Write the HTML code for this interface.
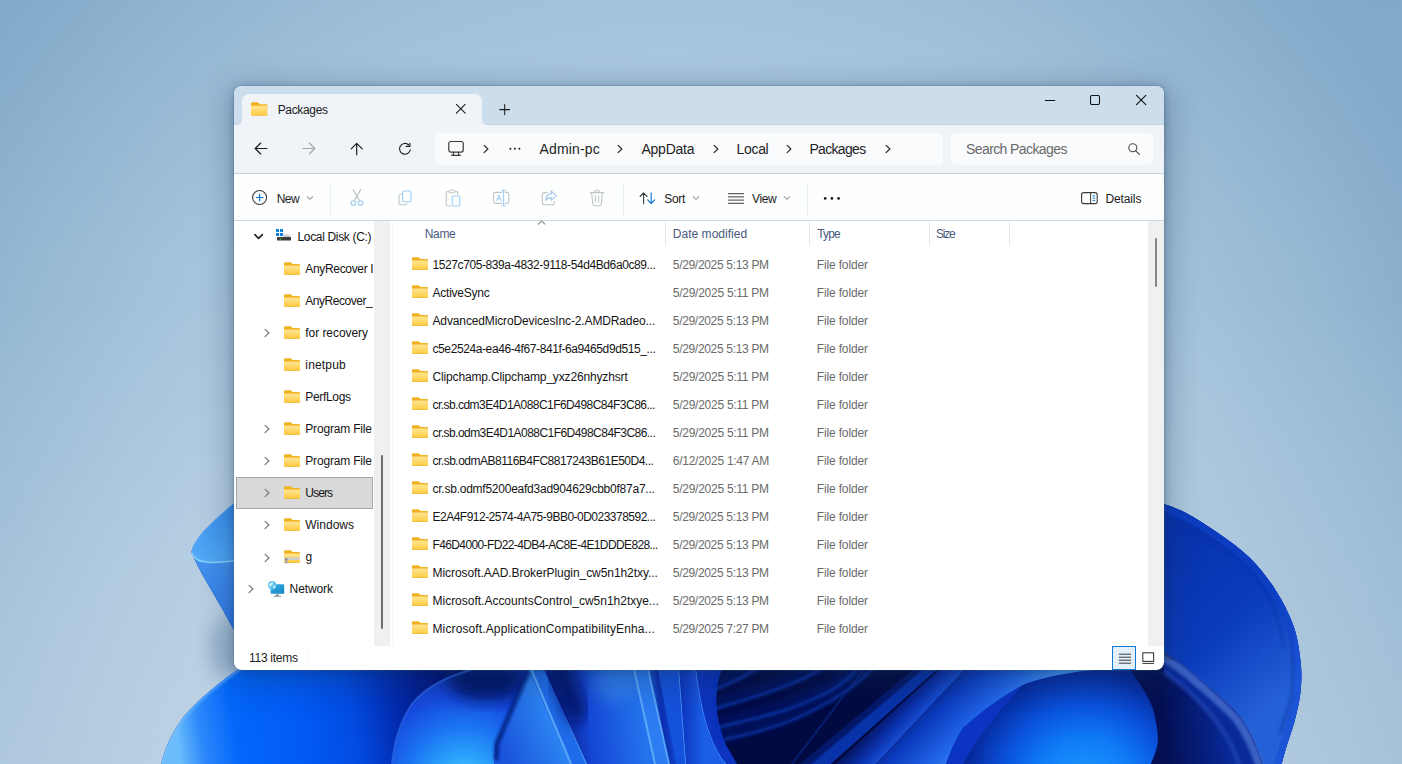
<!DOCTYPE html>
<html lang="en"><head><meta charset="utf-8"><title>Packages</title>
<style>
html,body{margin:0;padding:0;}
body{width:1402px;height:764px;position:relative;overflow:hidden;background:#9fbfd8;font-family:"Liberation Sans",sans-serif;}
.wall{position:absolute;left:0;top:0;}
.a{position:absolute;}
.t{position:absolute;white-space:nowrap;line-height:1;font-family:"Liberation Sans",sans-serif;}
.win{position:absolute;left:234px;top:86px;width:930px;height:584px;border-radius:8px;background:#fff;overflow:hidden;}
.shadow{position:absolute;left:234px;top:86px;width:930px;height:584px;border-radius:8px;box-shadow:0 0 0 1px rgba(70,100,130,.20),0 1px 7px 1px rgba(20,45,80,.22),0 8px 30px 6px rgba(20,45,80,.30);}
.sideclip{position:absolute;left:0;top:0;width:373px;height:764px;overflow:hidden;}
svg{display:block;overflow:visible}

</style></head>
<body>
<svg class="wall" width="1402" height="764" viewBox="0 0 1402 764">
<defs>
<radialGradient id="bgh" gradientUnits="userSpaceOnUse" cx="0" cy="0" r="1" gradientTransform="translate(670,560) scale(972,1080)">
<stop offset="0.0000" stop-color="#bbd4e8"/><stop offset="0.0714" stop-color="#bbd4e8"/><stop offset="0.1429" stop-color="#bad3e7"/><stop offset="0.2143" stop-color="#b8d2e6"/><stop offset="0.2857" stop-color="#b6d0e5"/><stop offset="0.3571" stop-color="#b3cee3"/><stop offset="0.4286" stop-color="#afcbe1"/><stop offset="0.5000" stop-color="#aac7de"/><stop offset="0.5714" stop-color="#a4c3db"/><stop offset="0.6429" stop-color="#9dbdd7"/><stop offset="0.7143" stop-color="#95b8d3"/><stop offset="0.7857" stop-color="#8cb1ce"/><stop offset="0.8571" stop-color="#85abca"/><stop offset="0.9286" stop-color="#83aac8"/><stop offset="1.0000" stop-color="#81a8c7"/></radialGradient>
<radialGradient id="bgv" gradientUnits="userSpaceOnUse" cx="330" cy="820" r="450">
<stop offset="0" stop-color="#d2deeb" stop-opacity="0.3"/><stop offset="1" stop-color="#d2deeb" stop-opacity="0"/>
</radialGradient>
<linearGradient id="bgt" gradientUnits="userSpaceOnUse" x1="0" y1="0" x2="0" y2="260"><stop offset="0" stop-color="#6a9cc2" stop-opacity="0.10"/><stop offset="1" stop-color="#6a9cc2" stop-opacity="0"/></linearGradient>
<linearGradient id="bgl" gradientUnits="userSpaceOnUse" x1="0" y1="300" x2="0" y2="764"><stop offset="0" stop-color="#d2deeb" stop-opacity="0"/><stop offset="1" stop-color="#d2deeb" stop-opacity="0.36"/></linearGradient>
<filter id="b4" x="-20%" y="-20%" width="140%" height="140%"><feGaussianBlur stdDeviation="4"/></filter>
<filter id="b8" x="-30%" y="-30%" width="160%" height="160%"><feGaussianBlur stdDeviation="8"/></filter>
<filter id="b14" x="-40%" y="-40%" width="180%" height="180%"><feGaussianBlur stdDeviation="14"/></filter>
<filter id="b2" x="-20%" y="-20%" width="140%" height="140%"><feGaussianBlur stdDeviation="1.6"/></filter>
<clipPath id="sil"><path d="M236,501.5 C233.2,503.9 225.0,510.6 219.5,515.7 C214.0,520.8 207.3,527.0 203.0,532.0 C198.7,537.0 195.3,542.5 193.4,546.0 C191.5,549.5 191.7,551.7 191.4,552.8 C192.9,555.8 196.9,564.5 200.2,570.7 C203.5,576.9 207.5,583.6 211.2,590.0 C214.9,596.4 218.4,602.4 222.2,609.0 C225.9,615.6 231.4,625.7 233.7,629.7 C236.0,633.7 235.6,632.5 236.0,633.0 L236,668 L240,668 C222,680 200,698 184,716 C172,732 165,748 161,764 L1281,766 C1281.8,763.0 1283.7,755.8 1286.0,748.0 C1288.3,740.2 1292.6,729.0 1295.0,719.5 C1297.4,710.0 1299.7,700.6 1300.6,691.0 C1301.5,681.4 1301.8,672.8 1300.6,662.0 C1299.4,651.2 1297.7,638.0 1293.5,626.0 C1289.3,614.0 1282.8,601.3 1275.5,590.0 C1268.2,578.7 1259.6,567.5 1250.0,558.0 C1240.4,548.5 1228.7,540.5 1218.0,533.0 C1207.3,525.5 1195.0,517.8 1186.0,513.0 C1177.0,508.2 1167.7,505.5 1164.0,504.0 L1164,480 L236,480 Z"/></clipPath>
<!-- cup petal -->
<linearGradient id="cupBody" gradientUnits="userSpaceOnUse" x1="195" y1="550" x2="240" y2="640"><stop offset="0" stop-color="#4797f1"/><stop offset="1" stop-color="#2c74e2"/></linearGradient>
<linearGradient id="cupIn" gradientUnits="userSpaceOnUse" x1="236" y1="500" x2="200" y2="560"><stop offset="0" stop-color="#3488ec"/><stop offset="1" stop-color="#52aaf5"/></linearGradient>
<!-- big left petal -->
<linearGradient id="bl" gradientUnits="userSpaceOnUse" x1="176" y1="730" x2="440" y2="690">
<stop offset="0" stop-color="#6abcfb"/><stop offset="0.09" stop-color="#2c88fa"/><stop offset="0.22" stop-color="#0366fa"/><stop offset="0.47" stop-color="#025af5"/><stop offset="0.66" stop-color="#024be1"/><stop offset="0.81" stop-color="#022eb4"/><stop offset="0.92" stop-color="#021d8e"/><stop offset="1" stop-color="#02157a"/></linearGradient>
<radialGradient id="blob2" gradientUnits="userSpaceOnUse" cx="464" cy="784" r="128"><stop offset="0" stop-color="#4fd0ff"/><stop offset="0.22" stop-color="#2aa4fb"/><stop offset="0.45" stop-color="#1b74f2"/><stop offset="0.7" stop-color="#164ade"/><stop offset="1" stop-color="#1032b8"/></radialGradient>
<linearGradient id="p1" gradientUnits="userSpaceOnUse" x1="500" y1="740" x2="560" y2="715"><stop offset="0" stop-color="#1a55dc"/><stop offset="1" stop-color="#2f8cf5"/></linearGradient>
<linearGradient id="p3" gradientUnits="userSpaceOnUse" x1="556" y1="700" x2="640" y2="690"><stop offset="0" stop-color="#08208c"/><stop offset="0.35" stop-color="#1446d4"/><stop offset="1" stop-color="#2474ee"/></linearGradient>
<linearGradient id="p3v" gradientUnits="userSpaceOnUse" x1="0" y1="669" x2="0" y2="764"><stop offset="0" stop-color="#3a94f5" stop-opacity=".55"/><stop offset="0.5" stop-color="#3a94f5" stop-opacity="0"/></linearGradient>
<linearGradient id="p5" gradientUnits="userSpaceOnUse" x1="645" y1="700" x2="672" y2="697"><stop offset="0" stop-color="#2a78ee"/><stop offset="0.55" stop-color="#0b2fae"/><stop offset="1" stop-color="#1448d6"/></linearGradient>
<linearGradient id="p7" gradientUnits="userSpaceOnUse" x1="682" y1="700" x2="704" y2="700"><stop offset="0" stop-color="#0d36c0"/><stop offset="1" stop-color="#1c5ee6"/></linearGradient>
<linearGradient id="band1" gradientUnits="userSpaceOnUse" x1="850" y1="700" x2="880" y2="730"><stop offset="0" stop-color="#02103f"/><stop offset="0.5" stop-color="#0a3cc0"/><stop offset="1" stop-color="#051a70"/></linearGradient>
<linearGradient id="band2" gradientUnits="userSpaceOnUse" x1="884" y1="704" x2="916" y2="734"><stop offset="0" stop-color="#020c44"/><stop offset="0.5" stop-color="#0a2fa8"/><stop offset="0.9" stop-color="#1c58e0"/><stop offset="1" stop-color="#2a6cec"/></linearGradient>
<linearGradient id="band3" gradientUnits="userSpaceOnUse" x1="925" y1="690" x2="985" y2="748"><stop offset="0" stop-color="#041a78"/><stop offset="0.3" stop-color="#0c3cc0"/><stop offset="0.7" stop-color="#2268ea"/><stop offset="1" stop-color="#4294f8"/></linearGradient>
<radialGradient id="blob3" gradientUnits="userSpaceOnUse" cx="1085" cy="790" r="170"><stop offset="0" stop-color="#1ea0ff"/><stop offset="0.3" stop-color="#0f7cf6"/><stop offset="0.5" stop-color="#0a52dc"/><stop offset="0.7" stop-color="#062a9e"/><stop offset="0.88" stop-color="#04135e"/><stop offset="1" stop-color="#030e4c"/></radialGradient>
<linearGradient id="lobe" gradientUnits="userSpaceOnUse" x1="1175" y1="560" x2="1290" y2="690"><stop offset="0" stop-color="#0834b0"/><stop offset="0.5" stop-color="#0b3cbc"/><stop offset="1" stop-color="#2460d6"/></linearGradient>
<linearGradient id="lobeIn" gradientUnits="userSpaceOnUse" x1="1160" y1="700" x2="1260" y2="690"><stop offset="0" stop-color="#030f52"/><stop offset="0.55" stop-color="#07258e"/><stop offset="1" stop-color="#0c3ab8"/></linearGradient>
</defs>
<rect width="1402" height="764" fill="url(#bgh)"/>
<rect width="1402" height="764" fill="url(#bgl)"/>
<rect width="1402" height="260" fill="url(#bgt)"/>
<rect width="1402" height="764" fill="url(#bgv)"/>
<!-- soft shadows on the wall -->
<ellipse cx="228" cy="648" rx="20" ry="30" fill="#7f9dbd" opacity=".5" filter="url(#b8)"/>
<g clip-path="url(#sil)">
<rect x="150" y="480" width="1170" height="290" fill="#0b3cc4"/>
<!-- cup petal -->
<path d="M236,501.5 C233.2,503.9 225.0,510.6 219.5,515.7 C214.0,520.8 207.3,527.0 203.0,532.0 C198.7,537.0 195.3,542.5 193.4,546.0 C191.5,549.5 191.7,551.7 191.4,552.8 C192.9,555.8 196.9,564.5 200.2,570.7 C203.5,576.9 207.5,583.6 211.2,590.0 C214.9,596.4 218.4,602.4 222.2,609.0 C225.9,615.6 231.4,625.7 233.7,629.7 C236.0,633.7 235.6,632.5 236.0,633.0 Z" fill="url(#cupBody)"/>
<path d="M236,501.5 C233.2,503.9 225.0,510.6 219.5,515.7 C214.0,520.8 207.3,527.0 203.0,532.0 C198.7,537.0 195.3,542.5 193.4,546.0 C191.5,549.5 191.7,551.7 191.4,552.8 C192.4,553.9 194.2,558.1 197.5,559.7 C200.8,561.3 206.4,562.0 211.0,562.4 C215.6,562.8 220.8,562.1 225.0,561.8 C229.2,561.4 234.2,560.5 236.0,560.3 Z" fill="url(#cupIn)"/>
<path d="M191.4,552.8 C192.4,553.9 194.2,558.1 197.5,559.7 C200.8,561.3 206.4,562.0 211.0,562.4 C215.6,562.8 220.8,562.1 225.0,561.8 C229.2,561.4 234.2,560.5 236.0,560.3" fill="none" stroke="#86d2fc" stroke-width="1.6"/>
<path d="M236.0,501.5 C233.2,503.9 225.0,510.6 219.5,515.7 C214.0,520.8 207.3,527.0 203.0,532.0 C198.7,537.0 195.3,542.5 193.4,546.0 C191.5,549.5 191.7,551.7 191.4,552.8" fill="none" stroke="#5cb0f6" stroke-width="1.3"/>
<!-- big left petal -->
<path d="M240,668 C222,680 200,698 184,716 C172,732 165,748 161,764 L540,764 L540,668 Z" fill="url(#bl)"/>
<path d="M240,668 C222,680 200,698 184,716 C172,732 165,748 161,764" fill="none" stroke="#7cc4fc" stroke-width="5" opacity=".55" filter="url(#b2)"/>
<!-- dark pocket above blob 2 -->
<!-- blob 2 -->
<path d="M392,764 C394,742 400,722 412,704 C426,686 448,676 474,669 L540,669 L540,764 Z" fill="url(#blob2)"/>
<ellipse cx="486" cy="680" rx="40" ry="20" fill="#04126a" filter="url(#b8)"/>
<path d="M392,764 C394,742 400,722 412,704 C426,686 448,676 474,669" fill="none" stroke="#2c66e6" stroke-width="2" opacity=".7"/>
<!-- petal 1 wedge + crease -->
<path d="M494,764 L495,745 L529,669 L570,764 Z" fill="url(#p1)"/>
<path d="M496,760 L497,743 L529,670" fill="none" stroke="#061a7a" stroke-width="5" opacity=".8" filter="url(#b2)"/>
<path d="M529,669 L544,669 L587,764 L570,764 Z" fill="#1e6cea"/>
<path d="M531,669 L571,764" stroke="#5eacf9" stroke-width="2.2" fill="none" opacity=".9"/>
<path d="M546,669 L587,764" stroke="#58a6f8" stroke-width="2.2" fill="none" opacity=".9"/>
<!-- broad face -->
<path d="M544,669 L634,669 L655,764 L587,764 Z" fill="url(#p3)"/>
<ellipse cx="616" cy="680" rx="22" ry="22" fill="#3a8ef2" opacity=".55" filter="url(#b8)"/>
<path d="M556,660 L580,720" stroke="#020c5c" stroke-width="22" fill="none" opacity=".8" filter="url(#b8)"/>
<!-- thin petals -->
<path d="M634,669 L648,669 L669,764 L655,764 Z" fill="#2c7cf2"/>
<path d="M648,669 L658,669 L676,764 L669,764 Z" fill="url(#p5)"/>
<path d="M634,669 L655,764" stroke="#62aef9" stroke-width="2" fill="none" opacity=".9"/>
<path d="M648,669 L669,764" stroke="#5caaf8" stroke-width="2" fill="none" opacity=".9"/>
<path d="M658,669 L679,669 L686,764 L676,764 Z" fill="#1552dc"/>
<path d="M679,669 L686,764" stroke="#4c9cf6" stroke-width="1.5" fill="none"/>
<path d="M679,669 L696,669 C700,700 707,740 726,764 L686,764 Z" fill="url(#p7)"/>
<path d="M696,669 C700,700 707,740 726,764" stroke="#4a98f5" stroke-width="1.5" fill="none"/>
<path d="M696,669 L722,669 C713,692 715,718 726,745 L737,764 L726,764 C707,740 700,700 696,669 Z" fill="#0c34c0"/>
<!-- dark navy core -->
<path d="M722,669 C713,692 715,718 726,745 L737,764 L900,764 L965,669 Z" fill="#020a42"/>
<g fill="none" stroke-linecap="round">
<path d="M714.3,689.7 Q735,682 758.5,668" transform="translate(-1.5,-5)" stroke="#06289a" stroke-width="9" opacity=".38" filter="url(#b4)"/>
<path d="M714,709 C735,703 760,695 775.6,689.7 C795,683 810,676 823,668" transform="translate(-1.5,-5)" stroke="#06289a" stroke-width="9" opacity=".38" filter="url(#b4)"/>
<path d="M718.5,727.5 C740,722 765,716 782.7,711 C800,705 818,697 832.6,689.7 C842,684 850,677 858,668" transform="translate(-1.5,-5)" stroke="#06289a" stroke-width="9" opacity=".38" filter="url(#b4)"/>
<path d="M724,739.6 C750,734 772,728 790,721 C806,714 820,707 832.6,699.7 C845,692 860,682 873,668" transform="translate(-1.5,-5)" stroke="#06289a" stroke-width="9" opacity=".38" filter="url(#b4)"/>
<path d="M714.3,689.7 Q735,682 758.5,668" stroke="#0a3cbc" stroke-width="2.4" opacity=".9" filter="url(#b2)"/>
<path d="M714,709 C735,703 760,695 775.6,689.7 C795,683 810,676 823,668" stroke="#0a3cbc" stroke-width="2.4" opacity=".9" filter="url(#b2)"/>
<path d="M718.5,727.5 C740,722 765,716 782.7,711 C800,705 818,697 832.6,689.7 C842,684 850,677 858,668" stroke="#0a3cbc" stroke-width="2.4" opacity=".9" filter="url(#b2)"/>
<path d="M724,739.6 C750,734 772,728 790,721 C806,714 820,707 832.6,699.7 C845,692 860,682 873,668" stroke="#0a3cbc" stroke-width="2.4" opacity=".9" filter="url(#b2)"/>
</g>
<path d="M792,764 L864,669" stroke="#0a2c8e" stroke-width="2" opacity=".6"/>
<!-- bands -->
<path d="M809,764 L831,764 L938,669 L922,669 Z" fill="#0832a8"/>
<path d="M800,764 L812,764 L924,669 L914,669 Z" fill="#051c74" opacity=".8"/>
<path d="M831,764 L836,764 L942,669 L938,669 Z" fill="#020a42"/>
<path d="M835,764 L876,764 L965,669 L940,669 Z" fill="url(#band2)"/>
<!-- big light band -->
<path d="M965,669 L1110,669 C1085,670 1050,675 1027,683 C1010,691 985,708 963,728 C955,740 950,752 946,764 L876,764 Z" fill="url(#band3)"/>
<path d="M1027,683 L1023,685 C1012,696 990,722 974,745 L963,764 L946,764 C950,752 955,740 963,728 C985,708 1010,691 1027,683 Z" fill="#0c34c2"/>
<!-- big blob -->
<path d="M1023,685 C1012,696 990,722 974,745 L963,764 L1260,764 L1260,669 L1110,669 C1085,670 1050,675 1023,685 Z" fill="url(#blob3)"/>
<!-- right lobe -->
<path d="M1126.0,664.0 C1128.3,667.3 1136.0,677.7 1140.0,684.0 C1144.0,690.3 1147.5,696.5 1150.0,702.0 C1152.5,707.5 1153.7,710.2 1155.0,717.0 C1156.3,723.8 1158.5,734.5 1157.7,742.7 C1156.9,750.9 1151.3,762.1 1150.0,766.0 L1320,766 L1320,500 L1126,500 Z" fill="url(#lobeIn)"/>
<path d="M1164.0,672.0 C1167.5,674.7 1178.3,682.2 1185.0,688.0 C1191.7,693.8 1198.5,701.0 1204.0,707.0 C1209.5,713.0 1213.7,718.0 1218.0,724.0 C1222.3,730.0 1226.3,736.0 1230.0,743.0 C1233.7,750.0 1238.3,762.2 1240.0,766.0 L1290,766 L1290,660 L1164,660 Z" fill="#0a2a9a"/>
<path d="M1164.0,672.0 C1167.5,674.7 1178.3,682.2 1185.0,688.0 C1191.7,693.8 1198.5,701.0 1204.0,707.0 C1209.5,713.0 1213.7,718.0 1218.0,724.0 C1222.3,730.0 1226.3,736.0 1230.0,743.0 C1233.7,750.0 1238.3,762.2 1240.0,766.0" fill="none" stroke="#2246b4" stroke-width="5" opacity=".65" filter="url(#b2)"/>
<path d="M1164.0,652.0 C1167.5,654.3 1178.3,661.0 1185.0,666.0 C1191.7,671.0 1197.8,676.7 1204.0,682.0 C1210.2,687.3 1216.0,692.3 1222.0,698.0 C1228.0,703.7 1234.7,709.0 1240.0,716.0 C1245.3,723.0 1250.0,731.7 1254.0,740.0 C1258.0,748.3 1262.3,761.7 1264.0,766.0 L1320,766 L1320,480 L1164,480 Z" fill="url(#lobe)"/>
<path d="M1164.0,652.0 C1167.5,654.3 1178.3,661.0 1185.0,666.0 C1191.7,671.0 1197.8,676.7 1204.0,682.0 C1210.2,687.3 1216.0,692.3 1222.0,698.0 C1228.0,703.7 1234.7,709.0 1240.0,716.0 C1245.3,723.0 1250.0,731.7 1254.0,740.0 C1258.0,748.3 1262.3,761.7 1264.0,766.0" transform="translate(-3,4)" fill="none" stroke="#5a84dc" stroke-width="8" opacity=".62" filter="url(#b2)"/>
<path d="M1164,533 C1180,532 1204,535 1240,558 C1262,578 1280,612 1284,650" fill="none" stroke="#082c9c" stroke-width="2.5" opacity=".4" filter="url(#b2)"/>
<path d="M1164,522 C1180,522 1210,534 1232,547 C1250,560 1270,584 1288,623 C1294,640 1294,680 1291,698 C1288,712 1284,722 1280,734" fill="none" stroke="#08309f" stroke-width="3" opacity=".5" filter="url(#b2)"/>
<path d="M1164.0,504.0 C1167.7,505.5 1177.0,508.2 1186.0,513.0 C1195.0,517.8 1207.3,525.5 1218.0,533.0 C1228.7,540.5 1240.4,548.5 1250.0,558.0 C1259.6,567.5 1268.2,578.7 1275.5,590.0 C1282.8,601.3 1289.3,614.0 1293.5,626.0 C1297.7,638.0 1299.4,651.2 1300.6,662.0 C1301.8,672.8 1301.5,681.4 1300.6,691.0 C1299.7,700.6 1297.4,710.0 1295.0,719.5 C1292.6,729.0 1288.3,740.2 1286.0,748.0 C1283.7,755.8 1281.8,763.0 1281.0,766.0" fill="none" stroke="#1248d4" stroke-width="14" opacity=".45"/>
</g>
</svg>

<div class="shadow"></div>
<div class="win">
  <!-- coordinates inside .win are page coords minus (234,86) -->
  <div class="a" style="left:0;top:0;width:930px;height:39px;background:#ccdeec;"></div>
  <div class="a" style="left:0;top:38px;width:930px;height:1px;background:#c1d4e4;"></div>
  <div class="a" style="left:0;top:39px;width:930px;height:48px;background:#f0f4f9;"></div>
  <div class="a" style="left:0;top:87px;width:930px;height:1px;background:#c4d6e6;"></div>
  <div class="a" style="left:0;top:88px;width:930px;height:46px;background:#fdfefe;"></div>
  <div class="a" style="left:0;top:134px;width:930px;height:1px;background:#cbd9e6;"></div>
  <!-- tab -->
  <svg class="a" style="left:0;top:0" width="260" height="40"><path d="M2 39 Q8 39 8 33 L8 16 Q8 8 16 8 L240 8 Q248 8 248 16 L248 33 Q248 39 254 39 Z" fill="#f0f4f9"/></svg>
  <!-- address + search boxes -->
  <div class="a" style="left:201px;top:47px;width:508px;height:32px;border-radius:5px;background:#f9fbfd;"></div>
  <div class="a" style="left:717px;top:47px;width:202px;height:32px;border-radius:5px;background:#f9fbfd;"></div>
  <!-- sidebar scrollbar track -->
  <div class="a" style="left:140px;top:135px;width:16px;height:425px;background:#f0f0f0;"></div>
  <div class="a" style="left:147px;top:369px;width:2px;height:174px;background:#6e6e6e;border-radius:1px;"></div>
  <div class="a" style="left:158px;top:135px;width:1px;height:425px;background:#f6f6f6;"></div>
  <!-- right scrollbar -->
  <div class="a" style="left:914px;top:135px;width:16px;height:425px;background:#f0f0f0;"></div>
  <div class="a" style="left:921px;top:152px;width:2px;height:49px;background:#858585;border-radius:1px;"></div>
  <!-- Users highlight -->
  <div class="a" style="left:2px;top:391px;width:137px;height:32px;background:#d9d9d9;box-sizing:border-box;border:1px solid #a8a8a8;"></div>
  <!-- header separators -->
  <div class="a" style="left:431px;top:135px;width:1px;height:25px;background:#e3e8ee;"></div>
  <div class="a" style="left:575px;top:135px;width:1px;height:25px;background:#e3e8ee;"></div>
  <div class="a" style="left:695px;top:135px;width:1px;height:25px;background:#e3e8ee;"></div>
  <div class="a" style="left:775px;top:135px;width:1px;height:25px;background:#e3e8ee;"></div>
  <!-- toolbar separators -->
  <div class="a" style="left:96px;top:98px;width:1px;height:31px;background:#eceff2;"></div>
  <div class="a" style="left:389px;top:98px;width:1px;height:31px;background:#eceff2;"></div>
  <div class="a" style="left:573px;top:98px;width:1px;height:31px;background:#eceff2;"></div>
  <!-- status separator -->
  <div class="a" style="left:74px;top:565px;width:1px;height:14px;background:#f7f7f7;"></div>
  <!-- view buttons -->
  <div class="a" style="left:878px;top:560px;width:24px;height:24px;box-sizing:border-box;border:1px solid #0f7bd6;background:#e3effa;"></div>
</div>

<svg width="0" height="0" style="position:absolute"><defs>
<linearGradient id="fb" x1="0" x2="0" y1="0" y2="1"><stop offset="0" stop-color="#ffe594"/><stop offset="1" stop-color="#ffcb3f"/></linearGradient>
<linearGradient id="mon" x1="0" x2="1" y1="0" y2="1"><stop offset="0" stop-color="#35b4e8"/><stop offset="1" stop-color="#1482c4"/></linearGradient>
</defs></svg>
<svg class="a" style="left:250.5px;top:102px" width="16.5" height="13.5" viewBox="0 0 16.5 13.5" ><g transform="scale(1.0312,1.0385)"><path d="M0 1.6 Q0 0.2 1.4 0.2 L5.9 0.2 Q6.9 0.2 7.5 0.9 L8.6 2.1 L14.6 2.1 Q16 2.1 16 3.5 L16 6 L0 6 Z" fill="#f1b11e"/><path d="M0 4.4 Q0 3.6 0.9 3.6 L15.1 3.6 Q16 3.6 16 4.4 L16 11.8 Q16 13 14.8 13 L1.2 13 Q0 13 0 11.8 Z" fill="url(#fb)"/><path d="M0.3 12.4 L15.7 12.4 Q15.5 13 14.8 13 L1.2 13 Q0.5 13 0.3 12.4 Z" fill="#e6ab2e"/></g></svg>
<svg class="a" style="left:284px;top:262px" width="16" height="13" viewBox="0 0 16 13" ><g transform="scale(1.0000,1.0000)"><path d="M0 1.6 Q0 0.2 1.4 0.2 L5.9 0.2 Q6.9 0.2 7.5 0.9 L8.6 2.1 L14.6 2.1 Q16 2.1 16 3.5 L16 6 L0 6 Z" fill="#f1b11e"/><path d="M0 4.4 Q0 3.6 0.9 3.6 L15.1 3.6 Q16 3.6 16 4.4 L16 11.8 Q16 13 14.8 13 L1.2 13 Q0 13 0 11.8 Z" fill="url(#fb)"/><path d="M0.3 12.4 L15.7 12.4 Q15.5 13 14.8 13 L1.2 13 Q0.5 13 0.3 12.4 Z" fill="#e6ab2e"/></g></svg>
<svg class="a" style="left:284px;top:294px" width="16" height="13" viewBox="0 0 16 13" ><g transform="scale(1.0000,1.0000)"><path d="M0 1.6 Q0 0.2 1.4 0.2 L5.9 0.2 Q6.9 0.2 7.5 0.9 L8.6 2.1 L14.6 2.1 Q16 2.1 16 3.5 L16 6 L0 6 Z" fill="#f1b11e"/><path d="M0 4.4 Q0 3.6 0.9 3.6 L15.1 3.6 Q16 3.6 16 4.4 L16 11.8 Q16 13 14.8 13 L1.2 13 Q0 13 0 11.8 Z" fill="url(#fb)"/><path d="M0.3 12.4 L15.7 12.4 Q15.5 13 14.8 13 L1.2 13 Q0.5 13 0.3 12.4 Z" fill="#e6ab2e"/></g></svg>
<svg class="a" style="left:284px;top:326px" width="16" height="13" viewBox="0 0 16 13" ><g transform="scale(1.0000,1.0000)"><path d="M0 1.6 Q0 0.2 1.4 0.2 L5.9 0.2 Q6.9 0.2 7.5 0.9 L8.6 2.1 L14.6 2.1 Q16 2.1 16 3.5 L16 6 L0 6 Z" fill="#f1b11e"/><path d="M0 4.4 Q0 3.6 0.9 3.6 L15.1 3.6 Q16 3.6 16 4.4 L16 11.8 Q16 13 14.8 13 L1.2 13 Q0 13 0 11.8 Z" fill="url(#fb)"/><path d="M0.3 12.4 L15.7 12.4 Q15.5 13 14.8 13 L1.2 13 Q0.5 13 0.3 12.4 Z" fill="#e6ab2e"/></g></svg>
<svg class="a" style="left:284px;top:358px" width="16" height="13" viewBox="0 0 16 13" ><g transform="scale(1.0000,1.0000)"><path d="M0 1.6 Q0 0.2 1.4 0.2 L5.9 0.2 Q6.9 0.2 7.5 0.9 L8.6 2.1 L14.6 2.1 Q16 2.1 16 3.5 L16 6 L0 6 Z" fill="#f1b11e"/><path d="M0 4.4 Q0 3.6 0.9 3.6 L15.1 3.6 Q16 3.6 16 4.4 L16 11.8 Q16 13 14.8 13 L1.2 13 Q0 13 0 11.8 Z" fill="url(#fb)"/><path d="M0.3 12.4 L15.7 12.4 Q15.5 13 14.8 13 L1.2 13 Q0.5 13 0.3 12.4 Z" fill="#e6ab2e"/></g></svg>
<svg class="a" style="left:284px;top:390px" width="16" height="13" viewBox="0 0 16 13" ><g transform="scale(1.0000,1.0000)"><path d="M0 1.6 Q0 0.2 1.4 0.2 L5.9 0.2 Q6.9 0.2 7.5 0.9 L8.6 2.1 L14.6 2.1 Q16 2.1 16 3.5 L16 6 L0 6 Z" fill="#f1b11e"/><path d="M0 4.4 Q0 3.6 0.9 3.6 L15.1 3.6 Q16 3.6 16 4.4 L16 11.8 Q16 13 14.8 13 L1.2 13 Q0 13 0 11.8 Z" fill="url(#fb)"/><path d="M0.3 12.4 L15.7 12.4 Q15.5 13 14.8 13 L1.2 13 Q0.5 13 0.3 12.4 Z" fill="#e6ab2e"/></g></svg>
<svg class="a" style="left:284px;top:422px" width="16" height="13" viewBox="0 0 16 13" ><g transform="scale(1.0000,1.0000)"><path d="M0 1.6 Q0 0.2 1.4 0.2 L5.9 0.2 Q6.9 0.2 7.5 0.9 L8.6 2.1 L14.6 2.1 Q16 2.1 16 3.5 L16 6 L0 6 Z" fill="#f1b11e"/><path d="M0 4.4 Q0 3.6 0.9 3.6 L15.1 3.6 Q16 3.6 16 4.4 L16 11.8 Q16 13 14.8 13 L1.2 13 Q0 13 0 11.8 Z" fill="url(#fb)"/><path d="M0.3 12.4 L15.7 12.4 Q15.5 13 14.8 13 L1.2 13 Q0.5 13 0.3 12.4 Z" fill="#e6ab2e"/></g></svg>
<svg class="a" style="left:284px;top:454px" width="16" height="13" viewBox="0 0 16 13" ><g transform="scale(1.0000,1.0000)"><path d="M0 1.6 Q0 0.2 1.4 0.2 L5.9 0.2 Q6.9 0.2 7.5 0.9 L8.6 2.1 L14.6 2.1 Q16 2.1 16 3.5 L16 6 L0 6 Z" fill="#f1b11e"/><path d="M0 4.4 Q0 3.6 0.9 3.6 L15.1 3.6 Q16 3.6 16 4.4 L16 11.8 Q16 13 14.8 13 L1.2 13 Q0 13 0 11.8 Z" fill="url(#fb)"/><path d="M0.3 12.4 L15.7 12.4 Q15.5 13 14.8 13 L1.2 13 Q0.5 13 0.3 12.4 Z" fill="#e6ab2e"/></g></svg>
<svg class="a" style="left:284px;top:486px" width="16" height="13" viewBox="0 0 16 13" ><g transform="scale(1.0000,1.0000)"><path d="M0 1.6 Q0 0.2 1.4 0.2 L5.9 0.2 Q6.9 0.2 7.5 0.9 L8.6 2.1 L14.6 2.1 Q16 2.1 16 3.5 L16 6 L0 6 Z" fill="#f1b11e"/><path d="M0 4.4 Q0 3.6 0.9 3.6 L15.1 3.6 Q16 3.6 16 4.4 L16 11.8 Q16 13 14.8 13 L1.2 13 Q0 13 0 11.8 Z" fill="url(#fb)"/><path d="M0.3 12.4 L15.7 12.4 Q15.5 13 14.8 13 L1.2 13 Q0.5 13 0.3 12.4 Z" fill="#e6ab2e"/></g></svg>
<svg class="a" style="left:284px;top:518px" width="16" height="13" viewBox="0 0 16 13" ><g transform="scale(1.0000,1.0000)"><path d="M0 1.6 Q0 0.2 1.4 0.2 L5.9 0.2 Q6.9 0.2 7.5 0.9 L8.6 2.1 L14.6 2.1 Q16 2.1 16 3.5 L16 6 L0 6 Z" fill="#f1b11e"/><path d="M0 4.4 Q0 3.6 0.9 3.6 L15.1 3.6 Q16 3.6 16 4.4 L16 11.8 Q16 13 14.8 13 L1.2 13 Q0 13 0 11.8 Z" fill="url(#fb)"/><path d="M0.3 12.4 L15.7 12.4 Q15.5 13 14.8 13 L1.2 13 Q0.5 13 0.3 12.4 Z" fill="#e6ab2e"/></g></svg>
<svg class="a" style="left:412px;top:257px" width="16" height="13" viewBox="0 0 16 13" ><g transform="scale(1.0000,1.0000)"><path d="M0 1.6 Q0 0.2 1.4 0.2 L5.9 0.2 Q6.9 0.2 7.5 0.9 L8.6 2.1 L14.6 2.1 Q16 2.1 16 3.5 L16 6 L0 6 Z" fill="#f1b11e"/><path d="M0 4.4 Q0 3.6 0.9 3.6 L15.1 3.6 Q16 3.6 16 4.4 L16 11.8 Q16 13 14.8 13 L1.2 13 Q0 13 0 11.8 Z" fill="url(#fb)"/><path d="M0.3 12.4 L15.7 12.4 Q15.5 13 14.8 13 L1.2 13 Q0.5 13 0.3 12.4 Z" fill="#e6ab2e"/></g></svg>
<svg class="a" style="left:412px;top:285px" width="16" height="13" viewBox="0 0 16 13" ><g transform="scale(1.0000,1.0000)"><path d="M0 1.6 Q0 0.2 1.4 0.2 L5.9 0.2 Q6.9 0.2 7.5 0.9 L8.6 2.1 L14.6 2.1 Q16 2.1 16 3.5 L16 6 L0 6 Z" fill="#f1b11e"/><path d="M0 4.4 Q0 3.6 0.9 3.6 L15.1 3.6 Q16 3.6 16 4.4 L16 11.8 Q16 13 14.8 13 L1.2 13 Q0 13 0 11.8 Z" fill="url(#fb)"/><path d="M0.3 12.4 L15.7 12.4 Q15.5 13 14.8 13 L1.2 13 Q0.5 13 0.3 12.4 Z" fill="#e6ab2e"/></g></svg>
<svg class="a" style="left:412px;top:313px" width="16" height="13" viewBox="0 0 16 13" ><g transform="scale(1.0000,1.0000)"><path d="M0 1.6 Q0 0.2 1.4 0.2 L5.9 0.2 Q6.9 0.2 7.5 0.9 L8.6 2.1 L14.6 2.1 Q16 2.1 16 3.5 L16 6 L0 6 Z" fill="#f1b11e"/><path d="M0 4.4 Q0 3.6 0.9 3.6 L15.1 3.6 Q16 3.6 16 4.4 L16 11.8 Q16 13 14.8 13 L1.2 13 Q0 13 0 11.8 Z" fill="url(#fb)"/><path d="M0.3 12.4 L15.7 12.4 Q15.5 13 14.8 13 L1.2 13 Q0.5 13 0.3 12.4 Z" fill="#e6ab2e"/></g></svg>
<svg class="a" style="left:412px;top:341px" width="16" height="13" viewBox="0 0 16 13" ><g transform="scale(1.0000,1.0000)"><path d="M0 1.6 Q0 0.2 1.4 0.2 L5.9 0.2 Q6.9 0.2 7.5 0.9 L8.6 2.1 L14.6 2.1 Q16 2.1 16 3.5 L16 6 L0 6 Z" fill="#f1b11e"/><path d="M0 4.4 Q0 3.6 0.9 3.6 L15.1 3.6 Q16 3.6 16 4.4 L16 11.8 Q16 13 14.8 13 L1.2 13 Q0 13 0 11.8 Z" fill="url(#fb)"/><path d="M0.3 12.4 L15.7 12.4 Q15.5 13 14.8 13 L1.2 13 Q0.5 13 0.3 12.4 Z" fill="#e6ab2e"/></g></svg>
<svg class="a" style="left:412px;top:369px" width="16" height="13" viewBox="0 0 16 13" ><g transform="scale(1.0000,1.0000)"><path d="M0 1.6 Q0 0.2 1.4 0.2 L5.9 0.2 Q6.9 0.2 7.5 0.9 L8.6 2.1 L14.6 2.1 Q16 2.1 16 3.5 L16 6 L0 6 Z" fill="#f1b11e"/><path d="M0 4.4 Q0 3.6 0.9 3.6 L15.1 3.6 Q16 3.6 16 4.4 L16 11.8 Q16 13 14.8 13 L1.2 13 Q0 13 0 11.8 Z" fill="url(#fb)"/><path d="M0.3 12.4 L15.7 12.4 Q15.5 13 14.8 13 L1.2 13 Q0.5 13 0.3 12.4 Z" fill="#e6ab2e"/></g></svg>
<svg class="a" style="left:412px;top:397px" width="16" height="13" viewBox="0 0 16 13" ><g transform="scale(1.0000,1.0000)"><path d="M0 1.6 Q0 0.2 1.4 0.2 L5.9 0.2 Q6.9 0.2 7.5 0.9 L8.6 2.1 L14.6 2.1 Q16 2.1 16 3.5 L16 6 L0 6 Z" fill="#f1b11e"/><path d="M0 4.4 Q0 3.6 0.9 3.6 L15.1 3.6 Q16 3.6 16 4.4 L16 11.8 Q16 13 14.8 13 L1.2 13 Q0 13 0 11.8 Z" fill="url(#fb)"/><path d="M0.3 12.4 L15.7 12.4 Q15.5 13 14.8 13 L1.2 13 Q0.5 13 0.3 12.4 Z" fill="#e6ab2e"/></g></svg>
<svg class="a" style="left:412px;top:425px" width="16" height="13" viewBox="0 0 16 13" ><g transform="scale(1.0000,1.0000)"><path d="M0 1.6 Q0 0.2 1.4 0.2 L5.9 0.2 Q6.9 0.2 7.5 0.9 L8.6 2.1 L14.6 2.1 Q16 2.1 16 3.5 L16 6 L0 6 Z" fill="#f1b11e"/><path d="M0 4.4 Q0 3.6 0.9 3.6 L15.1 3.6 Q16 3.6 16 4.4 L16 11.8 Q16 13 14.8 13 L1.2 13 Q0 13 0 11.8 Z" fill="url(#fb)"/><path d="M0.3 12.4 L15.7 12.4 Q15.5 13 14.8 13 L1.2 13 Q0.5 13 0.3 12.4 Z" fill="#e6ab2e"/></g></svg>
<svg class="a" style="left:412px;top:453px" width="16" height="13" viewBox="0 0 16 13" ><g transform="scale(1.0000,1.0000)"><path d="M0 1.6 Q0 0.2 1.4 0.2 L5.9 0.2 Q6.9 0.2 7.5 0.9 L8.6 2.1 L14.6 2.1 Q16 2.1 16 3.5 L16 6 L0 6 Z" fill="#f1b11e"/><path d="M0 4.4 Q0 3.6 0.9 3.6 L15.1 3.6 Q16 3.6 16 4.4 L16 11.8 Q16 13 14.8 13 L1.2 13 Q0 13 0 11.8 Z" fill="url(#fb)"/><path d="M0.3 12.4 L15.7 12.4 Q15.5 13 14.8 13 L1.2 13 Q0.5 13 0.3 12.4 Z" fill="#e6ab2e"/></g></svg>
<svg class="a" style="left:412px;top:481px" width="16" height="13" viewBox="0 0 16 13" ><g transform="scale(1.0000,1.0000)"><path d="M0 1.6 Q0 0.2 1.4 0.2 L5.9 0.2 Q6.9 0.2 7.5 0.9 L8.6 2.1 L14.6 2.1 Q16 2.1 16 3.5 L16 6 L0 6 Z" fill="#f1b11e"/><path d="M0 4.4 Q0 3.6 0.9 3.6 L15.1 3.6 Q16 3.6 16 4.4 L16 11.8 Q16 13 14.8 13 L1.2 13 Q0 13 0 11.8 Z" fill="url(#fb)"/><path d="M0.3 12.4 L15.7 12.4 Q15.5 13 14.8 13 L1.2 13 Q0.5 13 0.3 12.4 Z" fill="#e6ab2e"/></g></svg>
<svg class="a" style="left:412px;top:509px" width="16" height="13" viewBox="0 0 16 13" ><g transform="scale(1.0000,1.0000)"><path d="M0 1.6 Q0 0.2 1.4 0.2 L5.9 0.2 Q6.9 0.2 7.5 0.9 L8.6 2.1 L14.6 2.1 Q16 2.1 16 3.5 L16 6 L0 6 Z" fill="#f1b11e"/><path d="M0 4.4 Q0 3.6 0.9 3.6 L15.1 3.6 Q16 3.6 16 4.4 L16 11.8 Q16 13 14.8 13 L1.2 13 Q0 13 0 11.8 Z" fill="url(#fb)"/><path d="M0.3 12.4 L15.7 12.4 Q15.5 13 14.8 13 L1.2 13 Q0.5 13 0.3 12.4 Z" fill="#e6ab2e"/></g></svg>
<svg class="a" style="left:412px;top:537px" width="16" height="13" viewBox="0 0 16 13" ><g transform="scale(1.0000,1.0000)"><path d="M0 1.6 Q0 0.2 1.4 0.2 L5.9 0.2 Q6.9 0.2 7.5 0.9 L8.6 2.1 L14.6 2.1 Q16 2.1 16 3.5 L16 6 L0 6 Z" fill="#f1b11e"/><path d="M0 4.4 Q0 3.6 0.9 3.6 L15.1 3.6 Q16 3.6 16 4.4 L16 11.8 Q16 13 14.8 13 L1.2 13 Q0 13 0 11.8 Z" fill="url(#fb)"/><path d="M0.3 12.4 L15.7 12.4 Q15.5 13 14.8 13 L1.2 13 Q0.5 13 0.3 12.4 Z" fill="#e6ab2e"/></g></svg>
<svg class="a" style="left:412px;top:565px" width="16" height="13" viewBox="0 0 16 13" ><g transform="scale(1.0000,1.0000)"><path d="M0 1.6 Q0 0.2 1.4 0.2 L5.9 0.2 Q6.9 0.2 7.5 0.9 L8.6 2.1 L14.6 2.1 Q16 2.1 16 3.5 L16 6 L0 6 Z" fill="#f1b11e"/><path d="M0 4.4 Q0 3.6 0.9 3.6 L15.1 3.6 Q16 3.6 16 4.4 L16 11.8 Q16 13 14.8 13 L1.2 13 Q0 13 0 11.8 Z" fill="url(#fb)"/><path d="M0.3 12.4 L15.7 12.4 Q15.5 13 14.8 13 L1.2 13 Q0.5 13 0.3 12.4 Z" fill="#e6ab2e"/></g></svg>
<svg class="a" style="left:412px;top:593px" width="16" height="13" viewBox="0 0 16 13" ><g transform="scale(1.0000,1.0000)"><path d="M0 1.6 Q0 0.2 1.4 0.2 L5.9 0.2 Q6.9 0.2 7.5 0.9 L8.6 2.1 L14.6 2.1 Q16 2.1 16 3.5 L16 6 L0 6 Z" fill="#f1b11e"/><path d="M0 4.4 Q0 3.6 0.9 3.6 L15.1 3.6 Q16 3.6 16 4.4 L16 11.8 Q16 13 14.8 13 L1.2 13 Q0 13 0 11.8 Z" fill="url(#fb)"/><path d="M0.3 12.4 L15.7 12.4 Q15.5 13 14.8 13 L1.2 13 Q0.5 13 0.3 12.4 Z" fill="#e6ab2e"/></g></svg>
<svg class="a" style="left:412px;top:621px" width="16" height="13" viewBox="0 0 16 13" ><g transform="scale(1.0000,1.0000)"><path d="M0 1.6 Q0 0.2 1.4 0.2 L5.9 0.2 Q6.9 0.2 7.5 0.9 L8.6 2.1 L14.6 2.1 Q16 2.1 16 3.5 L16 6 L0 6 Z" fill="#f1b11e"/><path d="M0 4.4 Q0 3.6 0.9 3.6 L15.1 3.6 Q16 3.6 16 4.4 L16 11.8 Q16 13 14.8 13 L1.2 13 Q0 13 0 11.8 Z" fill="url(#fb)"/><path d="M0.3 12.4 L15.7 12.4 Q15.5 13 14.8 13 L1.2 13 Q0.5 13 0.3 12.4 Z" fill="#e6ab2e"/></g></svg>
<svg class="a" style="left:260.6px;top:326.5px" width="12" height="12" viewBox="0 0 12 12" ><path d="M4.1 2.4 L7.9 6 L4.1 9.6" fill="none" stroke="#7a7a7a" stroke-width="1.25" stroke-linecap="round" stroke-linejoin="round"/></svg>
<svg class="a" style="left:260.6px;top:422.5px" width="12" height="12" viewBox="0 0 12 12" ><path d="M4.1 2.4 L7.9 6 L4.1 9.6" fill="none" stroke="#7a7a7a" stroke-width="1.25" stroke-linecap="round" stroke-linejoin="round"/></svg>
<svg class="a" style="left:260.6px;top:454.5px" width="12" height="12" viewBox="0 0 12 12" ><path d="M4.1 2.4 L7.9 6 L4.1 9.6" fill="none" stroke="#7a7a7a" stroke-width="1.25" stroke-linecap="round" stroke-linejoin="round"/></svg>
<svg class="a" style="left:260.6px;top:486.5px" width="12" height="12" viewBox="0 0 12 12" ><path d="M4.1 2.4 L7.9 6 L4.1 9.6" fill="none" stroke="#7a7a7a" stroke-width="1.25" stroke-linecap="round" stroke-linejoin="round"/></svg>
<svg class="a" style="left:260.6px;top:518.5px" width="12" height="12" viewBox="0 0 12 12" ><path d="M4.1 2.4 L7.9 6 L4.1 9.6" fill="none" stroke="#7a7a7a" stroke-width="1.25" stroke-linecap="round" stroke-linejoin="round"/></svg>
<svg class="a" style="left:260.6px;top:551.5px" width="12" height="12" viewBox="0 0 12 12" ><path d="M4.1 2.4 L7.9 6 L4.1 9.6" fill="none" stroke="#7a7a7a" stroke-width="1.25" stroke-linecap="round" stroke-linejoin="round"/></svg>
<svg class="a" style="left:244.6px;top:583.4px" width="12" height="12" viewBox="0 0 12 12" ><path d="M4.1 2.4 L7.9 6 L4.1 9.6" fill="none" stroke="#7a7a7a" stroke-width="1.25" stroke-linecap="round" stroke-linejoin="round"/></svg>
<svg class="a" style="left:252px;top:230px" width="14" height="14" viewBox="0 0 14 14" ><path d="M2.8 4.6 L6.6 8.4 L10.4 4.6" fill="none" stroke="#1a1a1a" stroke-width="1.5" stroke-linecap="round" stroke-linejoin="round"/></svg>
<svg class="a" style="left:480.3px;top:142.9px" width="12" height="12" viewBox="0 0 12 12" ><path d="M4.1 2.3 L7.9 6 L4.1 9.7" fill="none" stroke="#2a2a2a" stroke-width="1.15" stroke-linecap="round" stroke-linejoin="round"/></svg>
<svg class="a" style="left:614.0px;top:142.9px" width="12" height="12" viewBox="0 0 12 12" ><path d="M4.1 2.3 L7.9 6 L4.1 9.7" fill="none" stroke="#2a2a2a" stroke-width="1.15" stroke-linecap="round" stroke-linejoin="round"/></svg>
<svg class="a" style="left:710.2px;top:142.9px" width="12" height="12" viewBox="0 0 12 12" ><path d="M4.1 2.3 L7.9 6 L4.1 9.7" fill="none" stroke="#2a2a2a" stroke-width="1.15" stroke-linecap="round" stroke-linejoin="round"/></svg>
<svg class="a" style="left:783.4px;top:142.9px" width="12" height="12" viewBox="0 0 12 12" ><path d="M4.1 2.3 L7.9 6 L4.1 9.7" fill="none" stroke="#2a2a2a" stroke-width="1.15" stroke-linecap="round" stroke-linejoin="round"/></svg>
<svg class="a" style="left:882.4px;top:142.9px" width="12" height="12" viewBox="0 0 12 12" ><path d="M4.1 2.3 L7.9 6 L4.1 9.7" fill="none" stroke="#2a2a2a" stroke-width="1.15" stroke-linecap="round" stroke-linejoin="round"/></svg>
<svg class="a" style="left:250px;top:138px" width="22" height="22" viewBox="0 0 22 22" ><path d="M5.3 10.5 L17 10.5 M10.7 5 L5.2 10.5 L10.7 16" fill="none" stroke="#1b1b1b" stroke-width="1.15" stroke-linecap="round" stroke-linejoin="round"/></svg>
<svg class="a" style="left:298px;top:138px" width="22" height="22" viewBox="0 0 22 22" ><path d="M5 10.5 L16.7 10.5 M11.3 5 L16.8 10.5 L11.3 16" fill="none" stroke="#a3a7ab" stroke-width="1.15" stroke-linecap="round" stroke-linejoin="round"/></svg>
<svg class="a" style="left:346px;top:138px" width="22" height="22" viewBox="0 0 22 22" ><path d="M10.7 5.3 L10.7 16.8 M5.2 10.9 L10.7 5.3 L16.2 10.9" fill="none" stroke="#1b1b1b" stroke-width="1.15" stroke-linecap="round" stroke-linejoin="round"/></svg>
<svg class="a" style="left:394px;top:138px" width="22" height="22" viewBox="0 0 22 22" ><path d="M16.27 11.74 A5.4 5.4 0 1 1 14.56 6.79" fill="none" stroke="#1b1b1b" stroke-width="1.15" stroke-linecap="round"/><path d="M12.1 8.35 L15.9 8.35 L15.9 5.2" fill="none" stroke="#1b1b1b" stroke-width="1.15" stroke-linecap="round" stroke-linejoin="round"/></svg>
<svg class="a" style="left:447px;top:139px" width="18" height="18" viewBox="0 0 18 18" ><rect x="1.8" y="2.5" width="14.4" height="10.6" rx="2" fill="none" stroke="#3a3a3a" stroke-width="1.2"/><path d="M6.6 13.3 L6.2 16 M11.4 13.3 L11.8 16 M4.6 16.3 L13.4 16.3" fill="none" stroke="#3a3a3a" stroke-width="1.2" stroke-linecap="round"/></svg>
<svg class="a" style="left:508px;top:145px" width="14" height="8" viewBox="0 0 14 8" ><circle cx="2.4" cy="3.8" r="1" fill="#1f1f1f"/><circle cx="6.9" cy="3.8" r="1" fill="#1f1f1f"/><circle cx="11.4" cy="3.8" r="1" fill="#1f1f1f"/></svg>
<svg class="a" style="left:1127px;top:142px" width="14" height="14" viewBox="0 0 14 14" ><circle cx="5.8" cy="5.8" r="4" fill="none" stroke="#4a4a4a" stroke-width="1.1"/><path d="M8.8 8.8 L12.3 12.3" stroke="#4a4a4a" stroke-width="1.2" stroke-linecap="round"/></svg>
<svg class="a" style="left:455px;top:103px" width="12" height="12" viewBox="0 0 12 12" ><path d="M1.4 1.4 L10.2 10.2 M10.2 1.4 L1.4 10.2" stroke="#1b1b1b" stroke-width="1.05" stroke-linecap="round"/></svg>
<svg class="a" style="left:498px;top:103px" width="14" height="14" viewBox="0 0 14 14" ><path d="M1.7 6.6 L11.7 6.6 M6.7 1.6 L6.7 11.6" stroke="#1b1b1b" stroke-width="1.05" stroke-linecap="round"/></svg>
<svg class="a" style="left:1044px;top:94px" width="14" height="14" viewBox="0 0 14 14" ><path d="M1.4 6.5 L10.8 6.5" stroke="#111" stroke-width="1.1" stroke-linecap="round"/></svg>
<svg class="a" style="left:1088px;top:94px" width="14" height="14" viewBox="0 0 14 14" ><rect x="2.5" y="1.5" width="9" height="9" rx="1.4" fill="none" stroke="#111" stroke-width="1.05"/></svg>
<svg class="a" style="left:1135px;top:94px" width="14" height="14" viewBox="0 0 14 14" ><path d="M1.5 1.4 L10.8 10.7 M10.8 1.4 L1.5 10.7" stroke="#111" stroke-width="1.1" stroke-linecap="round"/></svg>
<svg class="a" style="left:251px;top:189px" width="18" height="18" viewBox="0 0 18 18" ><circle cx="8.6" cy="8.5" r="7" fill="none" stroke="#3b3b3b" stroke-width="1.1"/><path d="M5.3 8.5 L11.9 8.5 M8.6 5.2 L8.6 11.8" stroke="#0b74d1" stroke-width="1.2" stroke-linecap="round"/></svg>
<svg class="a" style="left:305.2px;top:194.3px" width="10" height="8" viewBox="0 0 10 8" ><path d="M2.2 2.7 L5 5.4 L7.8 2.7" fill="none" stroke="#777" stroke-width="1" stroke-linecap="round" stroke-linejoin="round"/></svg>
<svg class="a" style="left:691.2px;top:194.3px" width="10" height="8" viewBox="0 0 10 8" ><path d="M2.2 2.7 L5 5.4 L7.8 2.7" fill="none" stroke="#777" stroke-width="1" stroke-linecap="round" stroke-linejoin="round"/></svg>
<svg class="a" style="left:782.2px;top:194.3px" width="10" height="8" viewBox="0 0 10 8" ><path d="M2.2 2.7 L5 5.4 L7.8 2.7" fill="none" stroke="#777" stroke-width="1" stroke-linecap="round" stroke-linejoin="round"/></svg>
<svg class="a" style="left:348px;top:188px" width="18" height="20" viewBox="0 0 18 20" ><path d="M5.2 1.8 L11.3 12.6 M12.6 1.8 L6.5 12.6" stroke="#b9bcbf" stroke-width="1.1" stroke-linecap="round" fill="none"/><circle cx="5.3" cy="15" r="2.3" fill="none" stroke="#9fcbef" stroke-width="1.1"/><circle cx="12.5" cy="15" r="2.3" fill="none" stroke="#9fcbef" stroke-width="1.1"/></svg>
<svg class="a" style="left:396px;top:188px" width="18" height="20" viewBox="0 0 18 20" ><path d="M6.2 6.2 L4.8 6.2 Q3 6.2 3 8 L3 15 Q3 16.8 4.8 16.8 L9 16.8 Q10.6 16.8 10.8 15.4" fill="none" stroke="#c2c5c8" stroke-width="1.1" stroke-linecap="round"/><rect x="6.6" y="3" width="8.4" height="10.8" rx="1.8" fill="none" stroke="#9fcbef" stroke-width="1.1"/></svg>
<svg class="a" style="left:444px;top:188px" width="18" height="20" viewBox="0 0 18 20" ><path d="M6.6 18 L3.6 18 Q2.2 18 2.2 16.6 L2.2 5 Q2.2 3.6 3.6 3.6 L12.4 3.6 Q13.8 3.6 13.8 5 L13.8 6.6" fill="none" stroke="#c2c5c8" stroke-width="1.1" stroke-linecap="round"/><rect x="5" y="2.2" width="6" height="2.6" rx="1.2" fill="#fdfefe" stroke="#c2c5c8" stroke-width="1"/><rect x="8.2" y="8" width="7.6" height="10" rx="1.5" fill="none" stroke="#9fcbef" stroke-width="1.1"/></svg>
<svg class="a" style="left:492px;top:188px" width="20" height="20" viewBox="0 0 20 20" ><path d="M9.6 4.4 L3.4 4.4 Q1.6 4.4 1.6 6.2 L1.6 13.6 Q1.6 15.4 3.4 15.4 L9.6 15.4 M13.6 4.4 L15 4.4 Q16.8 4.4 16.8 6.2 L16.8 13.6 Q16.8 15.4 15 15.4 L13.6 15.4" fill="none" stroke="#c2c5c8" stroke-width="1.1" stroke-linecap="round"/><path d="M11.6 2.4 L11.6 17.6 M9.8 2.2 L13.4 2.2 M9.8 17.8 L13.4 17.8" stroke="#9fcbef" stroke-width="1.1" stroke-linecap="round"/><path d="M4.6 12.6 L6.9 6.9 L9.2 12.6 M5.5 10.8 L8.3 10.8" fill="none" stroke="#9fcbef" stroke-width="1" stroke-linecap="round" stroke-linejoin="round"/></svg>
<svg class="a" style="left:540px;top:188px" width="20" height="20" viewBox="0 0 20 20" ><path d="M7.4 4.6 L4.4 4.6 Q2.4 4.6 2.4 6.6 L2.4 14.8 Q2.4 16.8 4.4 16.8 L12.4 16.8 Q14.4 16.8 14.4 14.8 L14.4 13.6" fill="none" stroke="#c2c5c8" stroke-width="1.1" stroke-linecap="round"/><path d="M11.2 2.8 L16.4 7.6 L11.2 12.2 L11.2 9.6 Q7.4 9.4 5.6 12.6 Q5.8 6.2 11.2 5.6 Z" fill="none" stroke="#9fcbef" stroke-width="1.1" stroke-linejoin="round"/></svg>
<svg class="a" style="left:588px;top:188px" width="18" height="20" viewBox="0 0 18 20" ><path d="M2.2 4.6 L15.8 4.6 M6.6 4.4 Q6.6 2.2 9 2.2 Q11.4 2.2 11.4 4.4 M3.6 4.8 L4.8 16.2 Q5 17.8 6.6 17.8 L11.4 17.8 Q13 17.8 13.2 16.2 L14.4 4.8 M7.4 8 L7.4 14 M10.6 8 L10.6 14" fill="none" stroke="#c2c5c8" stroke-width="1.1" stroke-linecap="round" stroke-linejoin="round"/></svg>
<svg class="a" style="left:638px;top:190px" width="20" height="16" viewBox="0 0 20 16" ><path d="M5.6 13.6 L5.6 3 M2.1 6.5 L5.6 2.9 L9.1 6.5" fill="none" stroke="#3b3b3b" stroke-width="1.1" stroke-linecap="round" stroke-linejoin="round"/><path d="M13.2 2.8 L13.2 13.4 M9.7 9.9 L13.2 13.5 L16.7 9.9" fill="none" stroke="#0b74d1" stroke-width="1.1" stroke-linecap="round" stroke-linejoin="round"/></svg>
<svg class="a" style="left:727px;top:192px" width="18" height="12" viewBox="0 0 18 12" ><path d="M1 1.7 L17 1.7 M1 4.9 L17 4.9 M1 8.1 L17 8.1 M1 11.3 L17 11.3" stroke="#3b3b3b" stroke-width="1"/></svg>
<svg class="a" style="left:822px;top:194px" width="20" height="8" viewBox="0 0 20 8" ><circle cx="3.2" cy="4.4" r="1.35" fill="#1b1b1b"/><circle cx="9.9" cy="4.4" r="1.35" fill="#1b1b1b"/><circle cx="16.6" cy="4.4" r="1.35" fill="#1b1b1b"/></svg>
<svg class="a" style="left:1080px;top:190px" width="20" height="16" viewBox="0 0 20 16" ><rect x="1.6" y="2.6" width="15.6" height="11" rx="2.2" fill="none" stroke="#3b3b3b" stroke-width="1.1"/><path d="M10.6 2.8 L10.6 13.4" stroke="#3b3b3b" stroke-width="1"/><path d="M12.6 5.8 L15.2 5.8 M12.6 8.1 L15.2 8.1 M12.6 10.4 L15.2 10.4" stroke="#0b74d1" stroke-width="1"/></svg>
<svg class="a" style="left:536px;top:219px" width="12" height="8" viewBox="0 0 12 8" ><path d="M2.3 5.2 L5.6 2 L8.9 5.2" fill="none" stroke="#555" stroke-width="1" stroke-linecap="round" stroke-linejoin="round"/></svg>
<svg class="a" style="left:275px;top:228px" width="18" height="14" viewBox="0 0 18 14" ><rect x="1" y="1" width="3" height="3" fill="#0a84e0"/><rect x="5" y="1" width="3" height="3" fill="#0a84e0"/><rect x="1" y="5" width="3" height="3" fill="#0a84e0"/><rect x="5" y="5" width="3" height="3" fill="#0a84e0"/><path d="M8.4 6.4 L14.2 6.4 L15.6 9 L8.4 9 Z" fill="#d0d0d0"/><rect x="2" y="9" width="14" height="3.5" rx="0.6" fill="#3c3c3c"/><circle cx="5.4" cy="10.7" r="0.8" fill="#3fe03f"/></svg>
<svg class="a" style="left:284px;top:550px" width="16" height="13" viewBox="0 0 16 13" ><g transform="scale(1.0000,1.0000)"><path d="M0 1.6 Q0 0.2 1.4 0.2 L5.9 0.2 Q6.9 0.2 7.5 0.9 L8.6 2.1 L14.6 2.1 Q16 2.1 16 3.5 L16 6 L0 6 Z" fill="#f1b11e"/><path d="M0 4.4 Q0 3.6 0.9 3.6 L15.1 3.6 Q16 3.6 16 4.4 L16 11.8 Q16 13 14.8 13 L1.2 13 Q0 13 0 11.8 Z" fill="url(#fb)"/><path d="M0.3 12.4 L15.7 12.4 Q15.5 13 14.8 13 L1.2 13 Q0.5 13 0.3 12.4 Z" fill="#e6ab2e"/></g></svg>
<svg class="a" style="left:284px;top:550px" width="16" height="14" viewBox="0 0 16 14" ><rect x="0.4" y="7.6" width="15.2" height="2.4" fill="#b9b9b9"/><path d="M1 7.6 V10 M3 7.6 V10 M5 7.6 V10 M7 7.6 V10 M9 7.6 V10 M11 7.6 V10 M13 7.6 V10 M15 7.6 V10" stroke="#e9e9e9" stroke-width="0.9"/><rect x="1" y="8" width="2.6" height="5.4" rx="0.8" fill="#8f8f8f"/><rect x="1.7" y="10.6" width="1.2" height="1.8" fill="#e5e5e5"/></svg>
<svg class="a" style="left:267px;top:580px" width="18" height="18" viewBox="0 0 18 18" ><rect x="3.6" y="4.2" width="13.6" height="9.6" rx="0.8" fill="url(#mon)"/><path d="M9 13.8 L11.6 13.8 L12 16 L8.6 16 Z" fill="#9aa7b0"/><rect x="6.6" y="15.8" width="7.4" height="1" fill="#8d9aa3"/><circle cx="5.2" cy="5.2" r="4.1" fill="#5cc1ee"/><path d="M2.2 4.4 Q4 2 6.6 2.4 Q5 3.6 5.4 5 Q3.6 5.2 3.2 7 Q2 6 2.2 4.4 Z M6.4 5.8 Q8 5.4 8.8 6.6 Q8 8.6 6.4 8.8 Q6.8 7.2 6.4 5.8 Z" fill="#e8f6fd"/></svg>
<svg class="a" style="left:1118px;top:652px" width="14" height="13" viewBox="0 0 14 13" ><path d="M0.8 2.2 L13 2.2 M0.8 5.2 L13 5.2 M0.8 8.2 L13 8.2 M0.8 11.2 L13 11.2" stroke="#3b3b3b" stroke-width="1"/></svg>
<svg class="a" style="left:1141px;top:651px" width="15" height="14" viewBox="0 0 15 14" ><rect x="1.8" y="1.8" width="10.8" height="8.6" fill="none" stroke="#3b3b3b" stroke-width="1.1"/><path d="M1.3 12.4 L13.1 12.4" stroke="#3b3b3b" stroke-width="1"/></svg>
<div class="sideclip">
<span class="t" style="left:297.50px;top:230.84px;font-size:12px;color:#151515;letter-spacing:-0.335px;">Local Disk (C:)</span>
<span class="t" style="left:305.30px;top:262.84px;font-size:12px;color:#151515;letter-spacing:-0.336px;">AnyRecover I</span>
<span class="t" style="left:305.30px;top:294.84px;font-size:12px;color:#151515;letter-spacing:-0.466px;">AnyRecover_</span>
<span class="t" style="left:305.30px;top:326.84px;font-size:12px;color:#151515;letter-spacing:-0.059px;">for recovery</span>
<span class="t" style="left:305.30px;top:358.84px;font-size:12px;color:#151515;letter-spacing:0.167px;">inetpub</span>
<span class="t" style="left:305.30px;top:390.84px;font-size:12px;color:#151515;letter-spacing:-0.333px;">PerfLogs</span>
<span class="t" style="left:305.30px;top:422.84px;font-size:12px;color:#151515;letter-spacing:-0.183px;">Program File</span>
<span class="t" style="left:305.30px;top:454.84px;font-size:12px;color:#151515;letter-spacing:-0.183px;">Program File</span>
<span class="t" style="left:305.30px;top:486.84px;font-size:12px;color:#151515;letter-spacing:-0.884px;">Users</span>
<span class="t" style="left:305.30px;top:518.84px;font-size:12px;color:#151515;">Windows</span>
<span class="t" style="left:305.60px;top:550.84px;font-size:12px;color:#151515;">g</span>
<span class="t" style="left:289.60px;top:582.84px;font-size:12px;color:#151515;letter-spacing:-0.102px;">Network</span>
</div>
<span class="t" style="left:277.70px;top:103.84px;font-size:12px;color:#1b1b1b;letter-spacing:-0.343px;">Packages</span>
<span class="t" style="left:539.40px;top:142.15px;font-size:14px;color:#1f1f1f;letter-spacing:0.181px;">Admin-pc</span>
<span class="t" style="left:641.40px;top:142.15px;font-size:14px;color:#1f1f1f;letter-spacing:-0.216px;">AppData</span>
<span class="t" style="left:736.60px;top:142.15px;font-size:14px;color:#1f1f1f;letter-spacing:-0.340px;">Local</span>
<span class="t" style="left:809.40px;top:142.15px;font-size:14px;color:#1f1f1f;letter-spacing:-0.669px;">Packages</span>
<span class="t" style="left:966.00px;top:142.15px;font-size:14px;color:#6a6a6a;letter-spacing:-0.595px;">Search Packages</span>
<span class="t" style="left:276.70px;top:192.84px;font-size:12px;color:#1b1b1b;letter-spacing:-0.520px;">New</span>
<span class="t" style="left:664.20px;top:192.84px;font-size:12px;color:#1b1b1b;letter-spacing:-0.291px;">Sort</span>
<span class="t" style="left:752.00px;top:192.84px;font-size:12px;color:#1b1b1b;letter-spacing:-0.376px;">View</span>
<span class="t" style="left:1105.40px;top:192.84px;font-size:12px;color:#1b1b1b;letter-spacing:-0.113px;">Details</span>
<span class="t" style="left:424.70px;top:227.84px;font-size:12px;color:#485a80;letter-spacing:-0.312px;">Name</span>
<span class="t" style="left:672.80px;top:227.84px;font-size:12px;color:#485a80;letter-spacing:0.028px;">Date modified</span>
<span class="t" style="left:817.20px;top:227.84px;font-size:12px;color:#485a80;letter-spacing:-0.847px;">Type</span>
<span class="t" style="left:936.00px;top:227.84px;font-size:12px;color:#485a80;letter-spacing:-1.200px;">Size</span>
<span class="t" style="left:432.50px;top:259.34px;font-size:12px;color:#151515;letter-spacing:-0.405px;">1527c705-839a-4832-9118-54d4Bd6a0c89...</span>
<span class="t" style="left:672.80px;top:259.34px;font-size:12px;color:#6b6b6b;letter-spacing:-0.320px;">5/29/2025 5:13 PM</span>
<span class="t" style="left:816.70px;top:259.34px;font-size:12px;color:#6b6b6b;letter-spacing:-0.139px;">File folder</span>
<span class="t" style="left:432.50px;top:287.34px;font-size:12px;color:#151515;letter-spacing:-0.228px;">ActiveSync</span>
<span class="t" style="left:672.80px;top:287.34px;font-size:12px;color:#6b6b6b;letter-spacing:-0.264px;">5/29/2025 5:11 PM</span>
<span class="t" style="left:816.70px;top:287.34px;font-size:12px;color:#6b6b6b;letter-spacing:-0.139px;">File folder</span>
<span class="t" style="left:432.50px;top:315.34px;font-size:12px;color:#151515;letter-spacing:-0.130px;">AdvancedMicroDevicesInc-2.AMDRadeo...</span>
<span class="t" style="left:672.80px;top:315.34px;font-size:12px;color:#6b6b6b;letter-spacing:-0.320px;">5/29/2025 5:13 PM</span>
<span class="t" style="left:816.70px;top:315.34px;font-size:12px;color:#6b6b6b;letter-spacing:-0.139px;">File folder</span>
<span class="t" style="left:432.50px;top:343.34px;font-size:12px;color:#151515;letter-spacing:-0.401px;">c5e2524a-ea46-4f67-841f-6a9465d9d515_...</span>
<span class="t" style="left:672.80px;top:343.34px;font-size:12px;color:#6b6b6b;letter-spacing:-0.320px;">5/29/2025 5:13 PM</span>
<span class="t" style="left:816.70px;top:343.34px;font-size:12px;color:#6b6b6b;letter-spacing:-0.139px;">File folder</span>
<span class="t" style="left:432.50px;top:371.34px;font-size:12px;color:#151515;letter-spacing:-0.152px;">Clipchamp.Clipchamp_yxz26nhyzhsrt</span>
<span class="t" style="left:672.80px;top:371.34px;font-size:12px;color:#6b6b6b;letter-spacing:-0.264px;">5/29/2025 5:11 PM</span>
<span class="t" style="left:816.70px;top:371.34px;font-size:12px;color:#6b6b6b;letter-spacing:-0.139px;">File folder</span>
<span class="t" style="left:432.50px;top:399.34px;font-size:12px;color:#151515;letter-spacing:-0.536px;">cr.sb.cdm3E4D1A088C1F6D498C84F3C86...</span>
<span class="t" style="left:672.80px;top:399.34px;font-size:12px;color:#6b6b6b;letter-spacing:-0.264px;">5/29/2025 5:11 PM</span>
<span class="t" style="left:816.70px;top:399.34px;font-size:12px;color:#6b6b6b;letter-spacing:-0.139px;">File folder</span>
<span class="t" style="left:432.50px;top:427.34px;font-size:12px;color:#151515;letter-spacing:-0.544px;">cr.sb.odm3E4D1A088C1F6D498C84F3C86...</span>
<span class="t" style="left:672.80px;top:427.34px;font-size:12px;color:#6b6b6b;letter-spacing:-0.264px;">5/29/2025 5:11 PM</span>
<span class="t" style="left:816.70px;top:427.34px;font-size:12px;color:#6b6b6b;letter-spacing:-0.139px;">File folder</span>
<span class="t" style="left:432.50px;top:455.34px;font-size:12px;color:#151515;letter-spacing:-0.498px;">cr.sb.odmAB8116B4FC8817243B61E50D4...</span>
<span class="t" style="left:672.80px;top:455.34px;font-size:12px;color:#6b6b6b;letter-spacing:-0.263px;">6/12/2025 1:47 AM</span>
<span class="t" style="left:816.70px;top:455.34px;font-size:12px;color:#6b6b6b;letter-spacing:-0.139px;">File folder</span>
<span class="t" style="left:432.50px;top:483.34px;font-size:12px;color:#151515;letter-spacing:-0.242px;">cr.sb.odmf5200eafd3ad904629cbb0f87a7...</span>
<span class="t" style="left:672.80px;top:483.34px;font-size:12px;color:#6b6b6b;letter-spacing:-0.264px;">5/29/2025 5:11 PM</span>
<span class="t" style="left:816.70px;top:483.34px;font-size:12px;color:#6b6b6b;letter-spacing:-0.139px;">File folder</span>
<span class="t" style="left:432.50px;top:511.34px;font-size:12px;color:#151515;letter-spacing:-0.509px;">E2A4F912-2574-4A75-9BB0-0D023378592...</span>
<span class="t" style="left:672.80px;top:511.34px;font-size:12px;color:#6b6b6b;letter-spacing:-0.320px;">5/29/2025 5:13 PM</span>
<span class="t" style="left:816.70px;top:511.34px;font-size:12px;color:#6b6b6b;letter-spacing:-0.139px;">File folder</span>
<span class="t" style="left:432.50px;top:539.34px;font-size:12px;color:#151515;letter-spacing:-0.619px;">F46D4000-FD22-4DB4-AC8E-4E1DDDE828...</span>
<span class="t" style="left:672.80px;top:539.34px;font-size:12px;color:#6b6b6b;letter-spacing:-0.320px;">5/29/2025 5:13 PM</span>
<span class="t" style="left:816.70px;top:539.34px;font-size:12px;color:#6b6b6b;letter-spacing:-0.139px;">File folder</span>
<span class="t" style="left:432.50px;top:567.34px;font-size:12px;color:#151515;letter-spacing:-0.065px;">Microsoft.AAD.BrokerPlugin_cw5n1h2txy...</span>
<span class="t" style="left:672.80px;top:567.34px;font-size:12px;color:#6b6b6b;letter-spacing:-0.320px;">5/29/2025 5:13 PM</span>
<span class="t" style="left:816.70px;top:567.34px;font-size:12px;color:#6b6b6b;letter-spacing:-0.139px;">File folder</span>
<span class="t" style="left:432.50px;top:595.34px;font-size:12px;color:#151515;letter-spacing:-0.011px;">Microsoft.AccountsControl_cw5n1h2txye...</span>
<span class="t" style="left:672.80px;top:595.34px;font-size:12px;color:#6b6b6b;letter-spacing:-0.320px;">5/29/2025 5:13 PM</span>
<span class="t" style="left:816.70px;top:595.34px;font-size:12px;color:#6b6b6b;letter-spacing:-0.139px;">File folder</span>
<span class="t" style="left:432.50px;top:623.34px;font-size:12px;color:#151515;letter-spacing:0.123px;">Microsoft.ApplicationCompatibilityEnha...</span>
<span class="t" style="left:672.80px;top:623.34px;font-size:12px;color:#6b6b6b;letter-spacing:-0.320px;">5/29/2025 7:27 PM</span>
<span class="t" style="left:816.70px;top:623.34px;font-size:12px;color:#6b6b6b;letter-spacing:-0.139px;">File folder</span>
<span class="t" style="left:249.00px;top:651.84px;font-size:12px;color:#1b1b1b;letter-spacing:-0.279px;">113 items</span>
</body></html>
